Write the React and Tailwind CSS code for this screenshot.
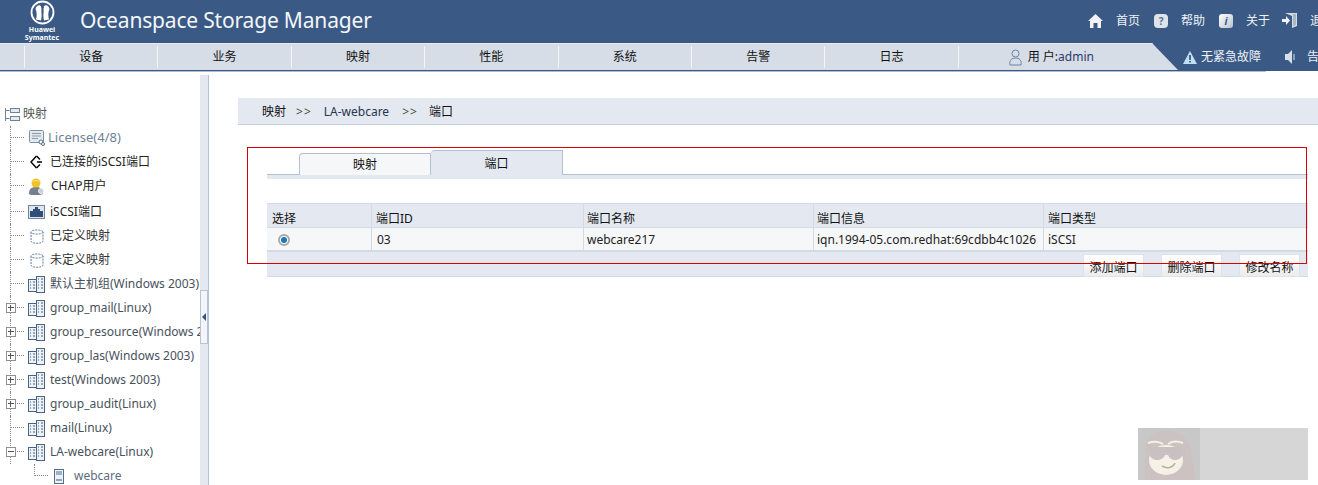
const font = { fontFamily: '"Noto Sans", "Noto Sans CJK SC", sans-serif' };

const navItems = ["设备", "业务", "映射", "性能", "系统", "告警", "日志"];

function Logo() {
  return (
    <div className="w-[60px] ml-[12px] flex flex-col items-center text-white mt-[-1px]">
      <svg width="25" height="25" viewBox="0 0 25 25">
        <circle cx="12.5" cy="12.5" r="11" fill="none" stroke="#fff" strokeWidth="1.800" />
        <path d="M5.500 9C6 5 10 4 11 6.500c1 3 0 4 .5 6.500.2 2 .2 5-.5 7.500l-5 -1c1-4 1-7-.5-10.500z" fill="#fff" />
        <path d="M19.500 9C19 5 15 4 14 6.500c-1 3 0 4-.5 6.500-.2 2-.2 5 .5 7.500l5-1c-1-4-1-7 .5-10.500z" fill="#fff" />
      </svg>
      <span className="text-[7px] leading-[8px] font-bold mt-[1px]">Huawei</span>
      <span className="text-[7px] leading-[8px] font-bold">Symantec</span>
    </div>
  );
}

function HomeIcon() {
  return (
    <svg width="15" height="14" viewBox="0 0 15 14">
      <path d="M7.500 0 15 7h-2v7H9.500V9h-4v5H2V7H0z" fill="#f1f3f6" />
    </svg>
  );
}

function HelpIcon() {
  return (
    <span className="w-[14px] h-[14px] rounded-[4px] bg-[#dfe4ea] text-[#55708f] text-[10px] font-bold leading-[14px] text-center">?</span>
  );
}

function InfoIcon() {
  return (
    <span className="w-[14px] h-[14px] rounded-[3px] bg-gradient-to-br from-white to-[#b9c3cf] text-[#3a5a85] text-[10px] italic font-bold leading-[14px] text-center">i</span>
  );
}

function ExitIcon() {
  return (
    <svg width="15" height="15" viewBox="0 0 15 15">
      <path d="M3 0h12v13l-5 2V3z" fill="#d5dbe3" />
      <path d="M11 1h3v11l-3 1z" fill="#aab6c4" />
      <path d="M0 6h4V3l4 4.500L4 12V9H0z" fill="#f2f4f7" />
    </svg>
  );
}

function TopLink({ icon, label, className }) {
  return (
    <div className={`flex items-center gap-[13px] ${className}`}>
      {icon}
      <span className="whitespace-nowrap">{label}</span>
    </div>
  );
}

function RootIcon() {
  return (
    <svg width="16" height="15" viewBox="0 0 16 15" fill="none" stroke="#6d8299">
      <path d="M1.500 1v13M1.500 3.500h4M1.500 11.500h4" />
      <rect x="6.500" y="1.500" width="9" height="4" fill="#e5eaf0" />
      <rect x="6.500" y="9.500" width="9" height="4" fill="#e5eaf0" />
    </svg>
  );
}

function LicenseIcon() {
  return (
    <svg width="16" height="16" viewBox="0 0 16 16">
      <rect x="0.500" y="0.500" width="14" height="12" rx="1" fill="#e3e8ee" stroke="#7c90a6" />
      <path d="M3 3.500h9M3 6h9M3 8.500h6" stroke="#8a9aac" />
      <circle cx="12" cy="12" r="2" fill="#fff" stroke="#54708e" />
      <circle cx="14" cy="14" r="1.500" fill="#fff" stroke="#54708e" />
    </svg>
  );
}

function ConnectedIcon() {
  return (
    <svg width="14" height="14" viewBox="0 0 14 14" fill="none" stroke="#000" strokeWidth="1.400">
      <path d="M6.500 1 1 7l5.500 6" />
      <path d="M6.500 1 10 4.500M6.500 13l3.500-3.500M7 7h5" />
    </svg>
  );
}

function UserIcon() {
  return (
    <svg width="17" height="19" viewBox="0 0 17 19">
      <path d="M1 17c0-5 2-7 7-7s7 2 7 7l-3 1H3z" fill="#78808c" />
      <circle cx="8" cy="6" r="4.500" fill="#efc328" />
      <path d="M4 5c1-3 7-3 8 0-3-1-5-1-8 0z" fill="#f7dc6a" />
      <circle cx="13" cy="14" r="2.500" fill="#c9ced6" stroke="#eef0f3" />
    </svg>
  );
}

function PortIcon() {
  return (
    <svg width="17" height="14" viewBox="0 0 17 14">
      <rect x="0.500" y="0.500" width="16" height="13" fill="#dfe5ec" stroke="#6d86a4" />
      <path d="M2 12V6h3V4h2V2h3v2h2v2h3v6z" fill="#2f4f78" />
    </svg>
  );
}

function DiskIcon() {
  return (
    <svg width="14" height="15" viewBox="0 0 14 15" fill="#fff" stroke="#5f7c9c" strokeDasharray="2 1">
      <path d="M1 3v9c0 3 12 3 12 0V3" />
      <ellipse cx="7" cy="3" rx="6" ry="2" />
    </svg>
  );
}

function HostGroupIcon() {
  return (
    <svg width="17" height="17" viewBox="0 0 17 17">
      <rect x="0.500" y="3.500" width="8" height="12" fill="#eef1f5" stroke="#446488" />
      <rect x="8.500" y="0.500" width="8" height="16" fill="#eef1f5" stroke="#446488" />
      <path d="M2 6h1M5 6h2M2 9h1M5 9h2M2 12h1M5 12h2M10 3h1M13 3h2M10 6h1M13 6h2M10 9h1M13 9h2M10 12h1M13 12h2" stroke="#3e5d80" />
    </svg>
  );
}

function ServerIcon() {
  return (
    <svg width="10" height="15" viewBox="0 0 10 15">
      <rect x="0.500" y="0.500" width="9" height="14" fill="#eef1f5" stroke="#51708f" />
      <path d="M2 3h6M2 5h6" stroke="#51708f" />
      <rect x="2" y="10" width="6" height="2" fill="#8fa3b8" />
    </svg>
  );
}

function TreeRow({ icon, label, box, tone = "text-[#48515c]", gap = "gap-[5px]", tall }) {
  return (
    <div className={`flex items-stretch whitespace-nowrap ${tall ? "h-[26px]" : "h-6"}`}>
      <div className="w-[10px] shrink-0" />
      <div className="relative w-[14px] shrink-0 border-l border-dotted border-[#8b8b8b]">
        <div className="h-3 border-b border-dotted border-[#8b8b8b]" />
        {box && (
          <span className="absolute left-[-5px] top-[7px] w-[10px] h-[10px] border border-[#8f8f8f] bg-white">
            <span className="absolute left-[1px] top-[3px] w-[6px] h-[1px] bg-[#555]" />
            {box === "plus" && <span className="absolute left-[3px] top-[1px] w-[1px] h-[6px] bg-[#555]" />}
          </span>
        )}
      </div>
      <div className={`flex items-center h-6 ${gap} pl-[4px]`}>
        <span className="w-[17px] flex justify-center shrink-0">{icon}</span>
        <span className={tone}>{label}</span>
      </div>
    </div>
  );
}

function Sidebar() {
  return (
    <aside className="w-[209px] shrink-0 flex h-full">
      <div className="w-[200px] shrink-0 overflow-hidden pt-[27px] text-[12px] leading-6">
        <div className="flex h-6 items-center gap-[3px] pl-[4px] text-[#555]">
          <RootIcon />
          <span>映射</span>
        </div>
        <TreeRow icon={<LicenseIcon />} label="License(4/8)" tone="text-[#6f8296] text-[13px] mt-[-2px]" gap="gap-[3px]" />
        <TreeRow icon={<ConnectedIcon />} label="已连接的iSCSI端口" tone="text-[#222]" />
        <TreeRow icon={<UserIcon />} label="CHAP用户" tone="text-[#222]" gap="gap-[6px]" tall />
        <TreeRow icon={<PortIcon />} label="iSCSI端口" tone="text-[#222]" />
        <TreeRow icon={<DiskIcon />} label="已定义映射" tone="text-[#333]" />
        <TreeRow icon={<DiskIcon />} label="未定义映射" tone="text-[#333]" />
        <TreeRow icon={<HostGroupIcon />} label="默认主机组(Windows 2003)" />
        <TreeRow icon={<HostGroupIcon />} label="group_mail(Linux)" box="plus" />
        <TreeRow icon={<HostGroupIcon />} label="group_resource(Windows 2003)" box="plus" />
        <TreeRow icon={<HostGroupIcon />} label="group_las(Windows 2003)" box="plus" />
        <TreeRow icon={<HostGroupIcon />} label="test(Windows 2003)" box="plus" />
        <TreeRow icon={<HostGroupIcon />} label="group_audit(Linux)" box="plus" />
        <TreeRow icon={<HostGroupIcon />} label="mail(Linux)" />
        <TreeRow icon={<HostGroupIcon />} label="LA-webcare(Linux)" box="minus" />
        <div className="flex h-6 items-stretch">
          <div className="w-[34px] shrink-0" />
          <div className="w-[14px] h-1/2 border-l border-b border-dotted border-[#8b8b8b]" />
          <div className="flex items-center gap-[10px] pl-[6px]">
            <ServerIcon />
            <span className="text-[#5d6c7d]">webcare</span>
          </div>
        </div>
      </div>
      <div className="relative w-[9px] shrink-0 bg-[#e4e9f1] border-r border-[#b7c3d4]">
        <div className="absolute left-0 top-[215px] w-[8px] h-[54px] bg-[#f3f5f8] border border-[#b7c3d4] flex items-center">
          <svg width="5" height="8" viewBox="0 0 5 8" className="ml-[1px]">
            <path d="M4 0v8L0 4z" fill="#2f5680" />
          </svg>
        </div>
      </div>
    </aside>
  );
}

function Main() {
  const cols = "grid grid-cols-[105px_212px_230px_230px_1fr]";
  return (
    <main className="flex-1 min-w-0 pl-[29px] pt-[23px] text-[12px]">
      <div className="h-[27px] bg-[#e4e9f1] border-b border-[#c6d0dc] flex items-center pt-[2px] pl-[24px] text-[#111] whitespace-nowrap">
        <span>映射</span>
        <span className="ml-[10px] tracking-[1px] text-[#4a4f33]">&gt;&gt;</span>
        <span className="ml-[12px] text-[#26364c]">LA-webcare</span>
        <span className="ml-[13px] tracking-[1px] text-[#4a4f33]">&gt;&gt;</span>
        <span className="ml-[11px]">端口</span>
      </div>

      <div className="ml-[29px] mr-[10px] mt-[25px]">
        <div className="h-[25px] flex items-end pl-[32px] border-b border-[#b4c1d2]">
          <div className="w-[132px] h-[22px] mb-[-1px] bg-[#f5f7f9] border border-b-0 border-[#b4c1d2] rounded-tl-[4px] text-center leading-[22px] text-[#111]">映射</div>
          <div className="w-[132px] h-[25px] mb-[-1px] bg-[#e4e9f1] border border-b-0 border-l-0 border-[#b4c1d2] rounded-tl-[4px] text-center leading-[25px] text-[#111]">端口</div>
        </div>
        <div className="h-[4px] bg-[#e4e9f1]" />

        <div className="mt-[24px]">
          <div className={`${cols} h-[25px] bg-[#e4e9f1] border-t border-b border-[#d3dae4] text-[#111]`}>
            <div className="pl-[5px] leading-[29px] border-r border-[#d3dae4]">选择</div>
            <div className="pl-[4px] leading-[29px] border-r border-[#d3dae4]">端口ID</div>
            <div className="pl-[3px] leading-[29px] border-r border-[#d3dae4]">端口名称</div>
            <div className="pl-[3px] leading-[29px] border-r border-[#d3dae4]">端口信息</div>
            <div className="pl-[4px] leading-[29px]">端口类型</div>
          </div>
          <div className={`${cols} h-[24px] bg-[#f5f7f9] border-b-2 border-[#d3dae4] text-[#222] whitespace-nowrap`}>
            <div className="pl-[11px] flex items-center border-r border-[#d3dae4]">
              <span className="w-[12px] h-[12px] rounded-full bg-white border-2 border-[#a9a9a9] flex items-center justify-center">
                <span className="w-[6px] h-[6px] rounded-full bg-[#1b76b4]" />
              </span>
            </div>
            <div className="pl-[5px] leading-[24px] border-r border-[#d3dae4]">03</div>
            <div className="pl-[3px] leading-[24px] border-r border-[#d3dae4]">webcare217</div>
            <div className="pl-[3px] leading-[24px] border-r border-[#d3dae4] overflow-hidden">iqn.1994-05.com.redhat:69cdbb4c1026</div>
            <div className="pl-[4px] leading-[24px]">iSCSI</div>
          </div>
          <div className="h-[25px] bg-[#e4e9f1] border-b border-[#d3dae4] flex justify-end items-start gap-[17px] pr-[8px] pt-[2px]">
            {["添加端口", "删除端口", "修改名称"].map((label) => (
              <button
                key={label}
                className="w-[61px] h-[23px] bg-gradient-to-b from-white to-[#ececec] border border-[#dde3ea] text-[#111] text-center leading-[25px]"
              >
                {label}
              </button>
            ))}
          </div>
        </div>
      </div>
    </main>
  );
}

export default function App() {
  return (
    <div className="relative w-[1318px] h-[485px] overflow-hidden bg-white" style={font}>
      <header className="h-[43px] bg-[#3a5a85] flex items-center text-white">
        <Logo />
        <h1 className="ml-[8px] mt-[-3px] text-[21px] leading-none whitespace-nowrap text-[#f4f7fa] tracking-[-0.18px]">Oceanspace Storage Manager</h1>
        <div className="ml-auto flex items-center text-[12px] text-[#eef2f6] overflow-hidden w-[230px] mt-[-2px]">
          <TopLink icon={<HomeIcon />} label="首页" />
          <TopLink icon={<HelpIcon />} label="帮助" className="ml-[14px]" />
          <TopLink icon={<InfoIcon />} label="关于" className="ml-[14px]" />
          <TopLink icon={<ExitIcon />} label="退出" className="ml-[12px]" />
        </div>
      </header>

      <nav className="h-[28px] bg-[#3a5a85] flex text-[12px]">
        <div className="flex w-[1178px] shrink-0 h-[27px] border-t border-[#e8ecf1] bg-[#d6dde7] [clip-path:polygon(0_0,1152px_0,1178px_100%,0_100%)]">
          <div className="w-[25px] shrink-0 my-[2px] border-r border-[#f3f5f8]" />
          {navItems.map((item) => (
            <div key={item} className="w-[133.4px] shrink-0 my-[2px] flex items-center justify-center border-r border-[#f3f5f8] text-[#111]">
              {item}
            </div>
          ))}
          <div className="flex-1 flex items-center pl-[50px] gap-[6px]">
            <svg width="13" height="17" viewBox="0 0 13 17" fill="none" stroke="#6d86a4">
              <circle cx="6.500" cy="4.500" r="3.500" />
              <path d="M1 16c-1-5 2-7 5.500-7s6.500 2 5.500 7z" />
            </svg>
            <span className="text-[#111]">用 户:<span className="text-[#2d3b66]">admin</span></span>
          </div>
        </div>
        <div className="flex-1 flex items-center text-[#eef2f6] whitespace-nowrap overflow-hidden pl-[5px]">
          <svg width="14" height="13" viewBox="0 0 14 13" className="shrink-0">
            <path d="M7 0l7 13H0z" fill="#bfe0f7" />
            <path d="M6.300 4h1.400v5H6.300zM6.300 10h1.400v1.500H6.300z" fill="#234" />
          </svg>
          <span className="ml-[4px]">无紧急故障</span>
          <svg width="11" height="14" viewBox="0 0 11 14" className="ml-[24px] shrink-0">
            <path d="M0 4h3l4-4v14l-4-4H0z" fill="#d9dfe6" />
            <path d="M9 4v6" stroke="#d9dfe6" />
          </svg>
          <span className="ml-[11px]">告警</span>
        </div>
      </nav>
      <div className="h-[1px] w-[1266px] bg-[#b0bccf]" />

      <div className="flex h-[414px] pt-[3px]">
        <Sidebar />
        <Main />
      </div>

      <div className="absolute left-[247px] top-[147px] w-[1060px] h-[117px] border border-[#d80000] pointer-events-none" />

      <div className="absolute left-[1138px] top-[428px] w-[170px] h-[52px] bg-[#d6d6d6] overflow-hidden">
        <svg width="62" height="52" viewBox="0 0 62 52">
          <rect width="62" height="52" fill="#c8c8c8" />
          <path d="M7 52V20C9 8 18 2 28 2s21 6 24 18l6 32z" fill="#cdc2c2" />
          <ellipse cx="28" cy="32" rx="17" ry="15" fill="#f5f1e6" />
          <path d="M10 15c6-2 11-2 15 1M30 16c4-3 10-3 15-1" stroke="#f5f1e6" strokeWidth="2" fill="none" />
          <path d="M10 19h35l-1 9c-3 6-12 5-14-1h-3c-2 6-12 7-15 1z" fill="#c9c1c1" />
          <path d="M24 38c5 3 11 2 13-3" stroke="#b8b09c" strokeWidth="1.500" fill="none" />
        </svg>
      </div>
    </div>
  );
}
